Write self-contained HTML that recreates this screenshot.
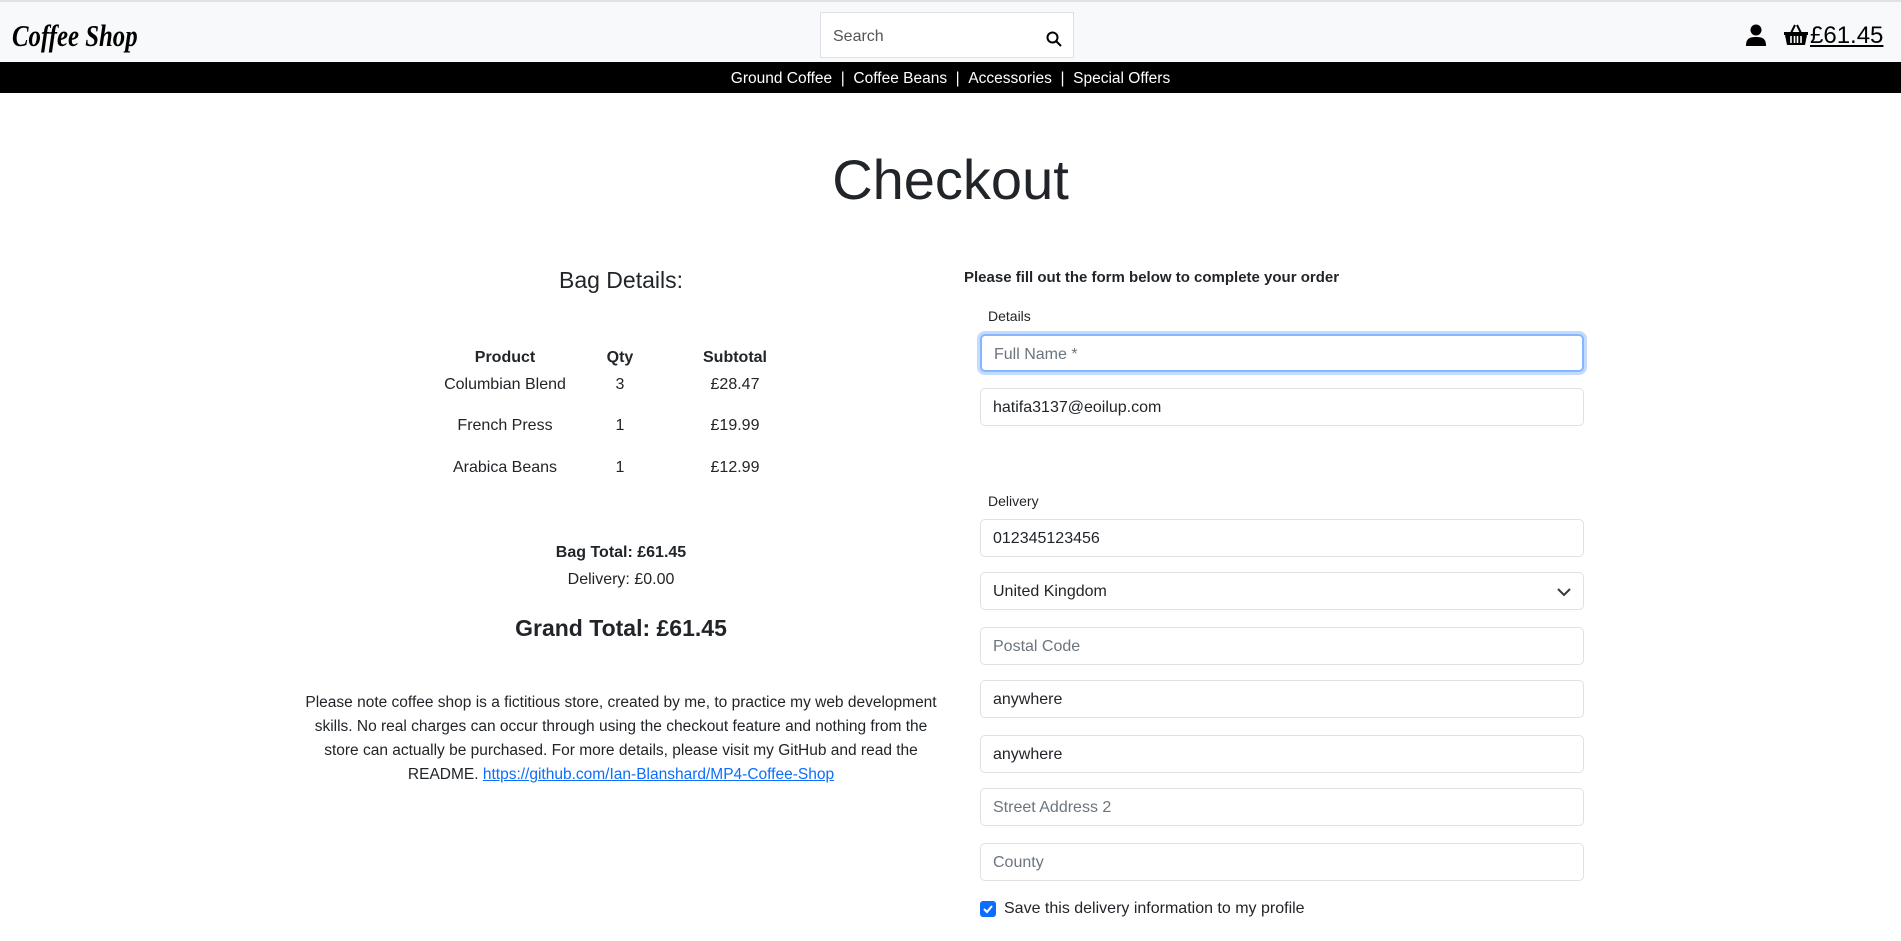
<!DOCTYPE html>
<html><head><meta charset="utf-8"><style>
*{box-sizing:border-box;margin:0;padding:0}
body{width:1901px;height:941px;overflow:hidden;background:#fff;font-family:"Liberation Sans",sans-serif;color:#212529;position:relative}
.abs{position:absolute}
.hdr{left:0;top:0;width:1901px;height:62px;background:#f8f9fa;border-top:2px solid #dee2e6}
.logo{left:12px;top:18px;font-family:"Liberation Serif",serif;font-style:italic;font-weight:bold;font-size:31px;color:#000;transform:scaleX(0.8);transform-origin:0 0;white-space:nowrap}
.search{left:820px;top:12px;width:254px;height:46px;background:#fff;border:1px solid #dee2e6}
.search span{position:absolute;left:12px;top:15px;font-size:16px;color:#555}
.nav{left:0;top:62px;width:1901px;height:31px;background:#000;color:#fff;font-size:15.5px;text-align:center;line-height:33px}
.c{text-align:center}
.inp{position:absolute;left:980px;width:604px;height:38px;border:1px solid #dee2e6;border-radius:5px;background:#fff;font-size:16px;padding:0 12px;line-height:38px;color:#212529}
.ph{color:#6c757d}
.lbl{position:absolute;left:988px;font-size:14px}
td{font-size:16px;text-align:center}
</style></head><body>
<div class="abs hdr"></div>
<div class="abs logo">Coffee Shop</div>
<div class="abs search"><span>Search</span>
<svg style="position:absolute;left:225px;top:18px" width="16" height="16" viewBox="0 0 16 16"><circle cx="6.5" cy="6.5" r="5" fill="none" stroke="#000" stroke-width="2"/><path d="M10 10l5 5" stroke="#000" stroke-width="2"/></svg></div>
<svg class="abs" style="left:1746px;top:24px" width="20" height="22" viewBox="0 0 20 22"><circle cx="10" cy="6" r="5.5"/><path d="M0 22c0-7 3-9 10-9s10 2 10 9z"/></svg>
<svg class="abs" style="left:1784px;top:24px" width="24" height="22" viewBox="0 0 24 22"><path d="M7 9L11 1M17 9L13 1" stroke="#000" stroke-width="2" fill="none"/><path d="M0 8h24v3h-1l-2 10H3L1 11H0z"/><path d="M7 12v7M10.5 12v7M13.5 12v7M17 12v7" stroke="#fff" stroke-width="1.6"/></svg>
<div class="abs" style="left:1810px;top:22px;font-size:24px;text-decoration:underline;color:#000">£61.45</div>
<div class="abs nav">Ground Coffee &nbsp;| &nbsp;Coffee Beans &nbsp;| &nbsp;Accessories &nbsp;| &nbsp;Special Offers</div>
<div class="abs c" style="left:0;width:1901px;top:147px;font-size:56px;">Checkout</div>
<div class="abs c" style="left:421px;width:400px;top:267px;font-size:23px">Bag Details:</div>
<table class="abs" style="left:430px;top:346px;border-collapse:collapse">
<tr style="height:24px"><td style="width:150px;font-weight:bold">Product</td><td style="width:80px;font-weight:bold">Qty</td><td style="width:150px;font-weight:bold">Subtotal</td></tr>
<tr style="height:30px"><td>Columbian Blend</td><td>3</td><td>£28.47</td></tr>
<tr style="height:52px"><td>French Press</td><td>1</td><td>£19.99</td></tr>
<tr style="height:32px"><td>Arabica Beans</td><td>1</td><td>£12.99</td></tr>
</table>
<div class="abs c" style="left:421px;width:400px;top:544px;font-size:16px;font-weight:bold">Bag Total: £61.45</div>
<div class="abs c" style="left:421px;width:400px;top:571px;font-size:16px">Delivery: £0.00</div>
<div class="abs c" style="left:421px;width:400px;top:615px;font-size:23px;font-weight:bold">Grand Total: £61.45</div>
<div class="abs c" style="left:300px;width:642px;top:691px;font-size:15.5px;line-height:24px">Please note coffee shop is a fictitious store, created by me, to practice my web development skills. No real charges can occur through using the checkout feature and nothing from the store can actually be purchased. For more details, please visit my GitHub and read the README. <span style="color:#0d6efd;text-decoration:underline">https://github.com/Ian-Blanshard/MP4-Coffee-Shop</span></div>
<div class="abs" style="left:964px;top:269px;font-size:15px;font-weight:bold">Please fill out the form below to complete your order</div>
<div class="lbl" style="top:308px">Details</div>
<div class="inp ph" style="top:334px;border:2px solid #86b7fe;box-shadow:0 0 0 3px rgba(13,110,253,.25)">Full Name *</div>
<div class="inp" style="top:388px">hatifa3137@eoilup.com</div>
<div class="lbl" style="top:493px">Delivery</div>
<div class="inp" style="top:519px">012345123456</div>
<div class="inp" style="top:572px">United Kingdom<svg style="position:absolute;right:12px;top:14px" width="14" height="10" viewBox="0 0 14 10"><path d="M1 2l6 6 6-6" fill="none" stroke="#343a40" stroke-width="2"/></svg></div>
<div class="inp ph" style="top:627px">Postal Code</div>
<div class="inp" style="top:680px">anywhere</div>
<div class="inp" style="top:735px">anywhere</div>
<div class="inp ph" style="top:788px">Street Address 2</div>
<div class="inp ph" style="top:843px">County</div>
<div class="abs" style="left:980px;top:901px;width:16px;height:16px;background:#0d6efd;border-radius:3px"><svg width="16" height="16" viewBox="0 0 16 16"><path d="M4 8l3 3 5-6" fill="none" stroke="#fff" stroke-width="2"/></svg></div>
<div class="abs" style="left:1004px;top:900px;font-size:16px">Save this delivery information to my profile</div>
</body></html>
